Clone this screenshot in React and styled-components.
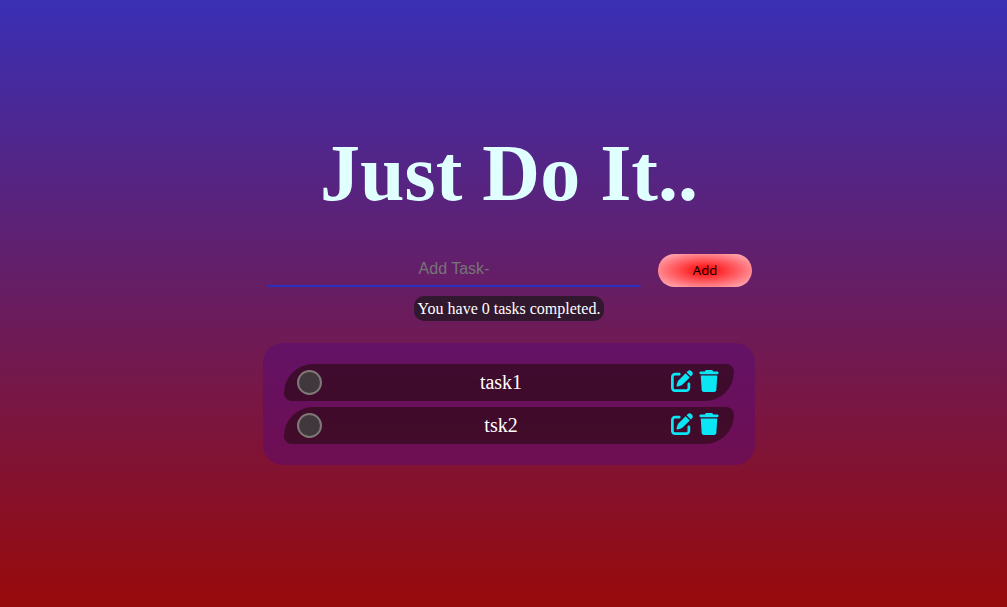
import React, { useState } from "react";
import styled, { createGlobalStyle } from "styled-components";
import { FaPenToSquare, FaTrash } from "react-icons/fa6";

const GlobalStyle = createGlobalStyle`
  * { box-sizing: border-box; }
  body {
    margin: 0;
    font-family: "Liberation Serif", "Times New Roman", serif;
  }
`;

const Page = styled.div`
  min-height: 100vh;
  display: flex;
  flex-direction: column;
  align-items: center;
  padding: 127px 0 64px 11px;
  background: linear-gradient(#3a2fb5, #980a0a);
`;

const Title = styled.h1`
  margin: 0 0 32px;
  font-size: 80px;
  line-height: 92px;
  color: lightcyan;
`;

const Form = styled.form`
  display: flex;
  align-items: flex-end;
  gap: 16px;
  width: 100%;
  max-width: 486px;
`;

const TaskInput = styled.input`
  flex: 1;
  min-width: 0;
  height: 36px;
  padding: 0;
  border: 2px solid transparent;
  border-bottom-color: #2a30c2;
  border-radius: 4px;
  outline: none;
  background: transparent;
  color: white;
  text-align: center;
  font: 16px "Liberation Sans", Arial, sans-serif;

  &::placeholder { color: #757575; }
`;

const AddButton = styled.button`
  width: 94px;
  height: 33px;
  padding: 0 0 1px;
  border: 0;
  border-radius: 20px;
  background: radial-gradient(red, pink);
  color: black;
  font: 13px "Noto Sans", sans-serif;
  cursor: pointer;
`;

const Status = styled.p`
  margin: 9px 0 22px;
  padding: 3px 4px;
  border-radius: 10px;
  background: #32182f;
  color: white;
  font-size: 16px;
  line-height: 19px;
`;

const List = styled.ul`
  display: flex;
  flex-direction: column;
  gap: 6px;
  width: 100%;
  max-width: 492px;
  margin: 0;
  padding: 21px;
  border-radius: 20px;
  background: rgba(82, 8, 130, 0.4);
  list-style: none;
`;

const Task = styled.li`
  display: flex;
  align-items: center;
  height: 37px;
  padding: 0 14px 0 13px;
  border-radius: 30px 8px;
  background: rgba(36, 8, 12, 0.6);
`;

const Check = styled.input`
  appearance: none;
  flex: none;
  width: 25px;
  height: 25px;
  margin: 0;
  border: 2px solid #807878;
  border-radius: 50%;
  background: #40383c;
  cursor: pointer;

  &:checked { background: #0be6f5; }
`;

const TaskName = styled.label`
  flex: 1;
  padding: 0 0 2px 10px;
  text-align: center;
  color: white;
  font-size: 20px;
  line-height: 24px;
`;

const Actions = styled.div`
  display: flex;
  gap: 4px;
`;

const IconButton = styled.button`
  display: flex;
  justify-content: center;
  width: 23px;
  padding: 0 0 4px;
  border: 0;
  background: none;
  color: #0be6f5;
  font-size: 22px;
  cursor: pointer;
`;

export default function App() {
  const [tasks, setTasks] = useState([
    { id: 1, name: "task1", done: false },
    { id: 2, name: "tsk2", done: false },
  ]);
  const [draft, setDraft] = useState("");
  const completed = tasks.filter((task) => task.done).length;

  const addTask = (event) => {
    event.preventDefault();
    if (!draft.trim()) return;
    setTasks([...tasks, { id: Date.now(), name: draft.trim(), done: false }]);
    setDraft("");
  };

  const toggle = (id) =>
    setTasks(tasks.map((t) => (t.id === id ? { ...t, done: !t.done } : t)));

  const remove = (id) => setTasks(tasks.filter((t) => t.id !== id));

  const edit = (task) => {
    setDraft(task.name);
    remove(task.id);
  };

  return (
    <>
      <GlobalStyle />
      <Page>
        <Title>Just Do It..</Title>
        <Form onSubmit={addTask}>
          <TaskInput
            aria-label="Add task"
            placeholder="Add Task-"
            value={draft}
            onChange={(event) => setDraft(event.target.value)}
          />
          <AddButton type="submit">Add</AddButton>
        </Form>
        <Status>You have {completed} tasks completed.</Status>
        <List>
          {tasks.map((task) => (
            <Task key={task.id}>
              <Check
                type="checkbox"
                id={`task-${task.id}`}
                checked={task.done}
                onChange={() => toggle(task.id)}
              />
              <TaskName htmlFor={`task-${task.id}`}>{task.name}</TaskName>
              <Actions>
                <IconButton type="button" aria-label="Edit" onClick={() => edit(task)}>
                  <FaPenToSquare />
                </IconButton>
                <IconButton type="button" aria-label="Delete" onClick={() => remove(task.id)}>
                  <FaTrash />
                </IconButton>
              </Actions>
            </Task>
          ))}
        </List>
      </Page>
    </>
  );
}
